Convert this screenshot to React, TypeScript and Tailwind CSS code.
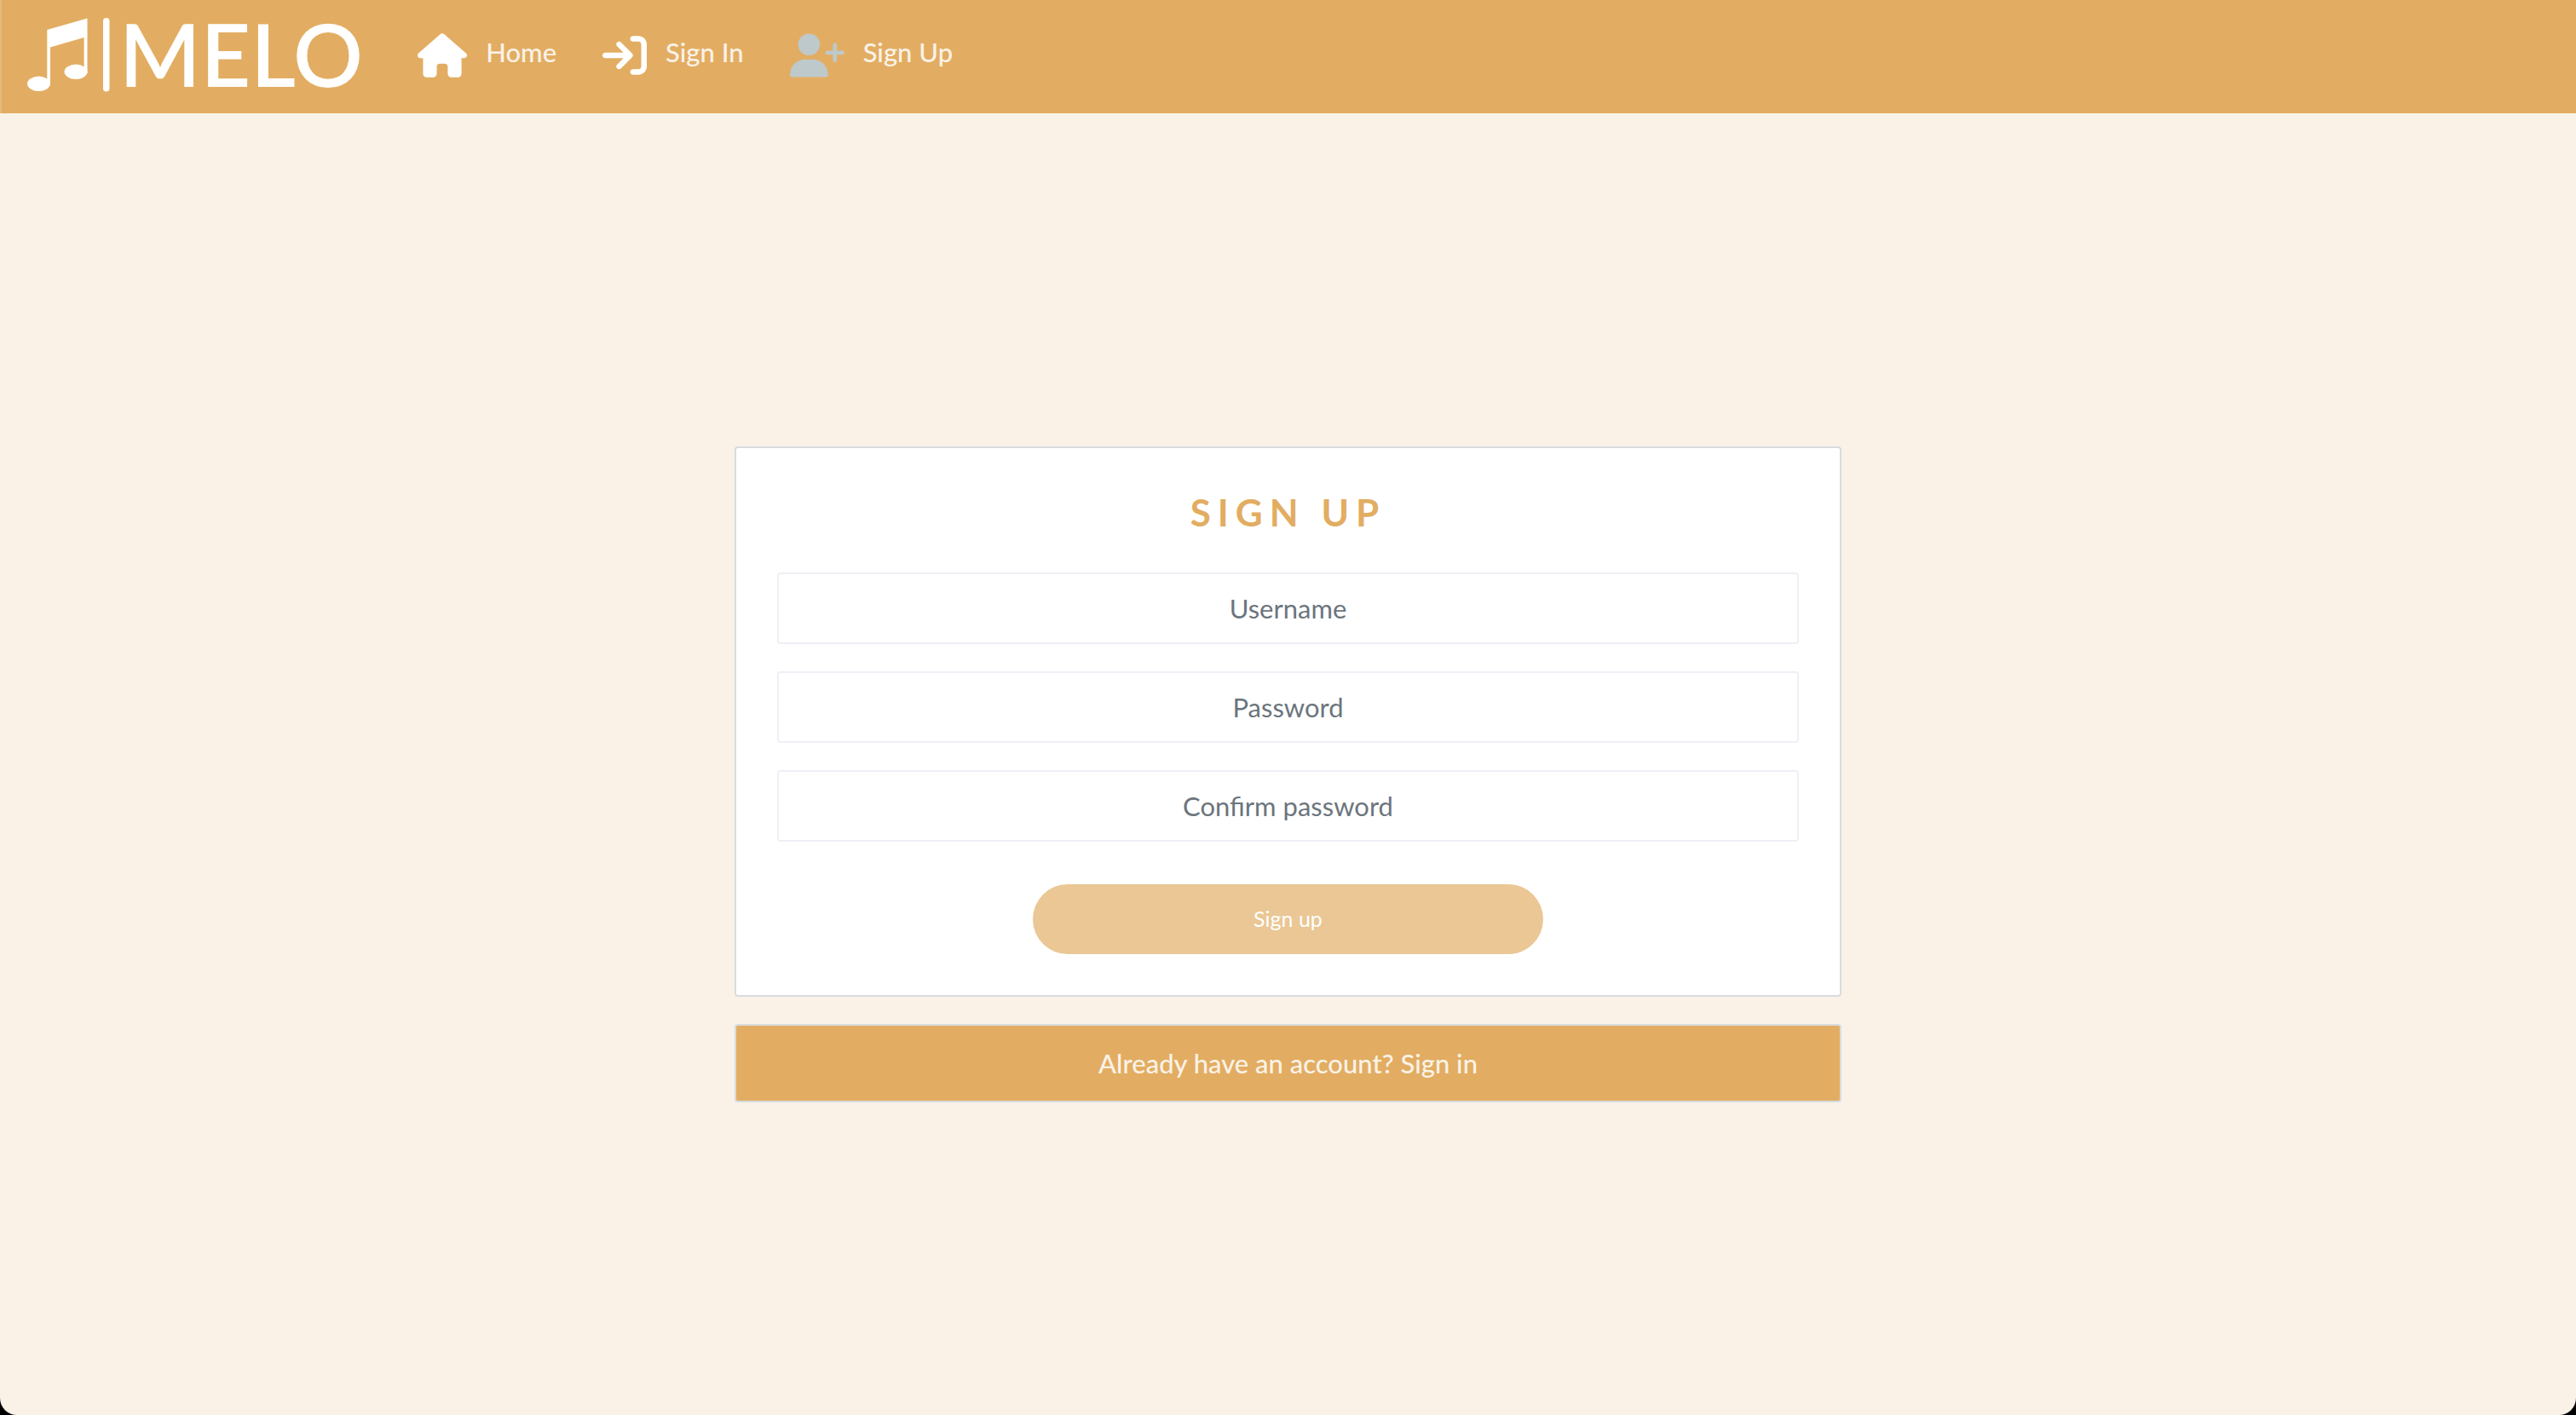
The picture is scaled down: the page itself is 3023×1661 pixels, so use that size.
import { FaHouse, FaArrowRightToBracket, FaUserPlus } from "react-icons/fa6";

const links = [
  { label: "Home", Icon: FaHouse, look: "w-[58px] text-white" },
  { label: "Sign In", Icon: FaArrowRightToBracket, look: "w-[52px] text-white" },
  { label: "Sign Up", Icon: FaUserPlus, look: "w-[64px] text-[#bdc9ca]" },
];

const fields = [
  { label: "Username", type: "text", name: "username" },
  { label: "Password", type: "password", name: "password1" },
  { label: "Confirm password", type: "password", name: "password2" },
];

function Logo() {
  return (
    <a href="#home" aria-label="Melo" className="flex items-center text-white">
      <svg viewBox="0 0 98 88" className="h-[88px] w-[98px]" fill="currentColor" aria-hidden="true">
        <path d="M23.3 14 70.5.5V65H66.6V23L27 34.5V79H23.3Z" />
        <ellipse cx="13.5" cy="77.3" rx="13.5" ry="8.7" />
        <ellipse cx="57" cy="63.3" rx="13.5" ry="8.7" />
        <rect x="89" y="0" width="7.5" height="86.5" rx="3.75" />
      </svg>
      <span className="pb-1 pl-[10px] text-[102px] leading-[88px] font-semibold">MELO</span>
    </a>
  );
}

export default function App() {
  return (
    <div className="min-h-screen bg-black font-['Lato',sans-serif]">
      <div className="flex min-h-screen flex-col overflow-hidden rounded-b-[20px] bg-[#faf2e7]">
        <nav className="flex h-[133px] items-center border-l-2 border-[#e6b97a] bg-[#e2ad62] pb-1 pl-[30px]">
          <Logo />
          <ul className="flex items-center gap-[54px] pl-16">
            {links.map(({ label, Icon, look }) => (
              <li key={label}>
                <a href="#" className="flex items-center gap-[22px] text-[31px] leading-[48px] font-medium text-[#faf2e7]">
                  <Icon className={`h-[52px] ${look}`} aria-hidden="true" />
                  <span className="pb-2">{label}</span>
                </a>
              </li>
            ))}
          </ul>
        </nav>

        <main className="mx-auto flex w-[43%] flex-1 flex-col justify-center gap-8 pt-6">
          <form className="flex flex-col items-center gap-8 rounded border-2 border-[#d9dbdf] bg-white p-12">
            <h1 className="mb-3 text-[44px] leading-[54px] font-bold tracking-[8px] text-[#e2ad62] uppercase">Sign Up</h1>
            {fields.map(({ label, type, name }) => (
              <input
                key={name}
                type={type}
                name={name}
                aria-label={label}
                placeholder={label}
                className="h-[84px] w-full rounded border-2 border-[#efeff7] text-center text-[31px] placeholder:text-[#6c757d]"
              />
            ))}
            <button type="submit" className="mt-[18px] h-[82px] w-1/2 rounded-full bg-[#eac794] text-[25px] text-white">
              Sign up
            </button>
          </form>
          <div className="flex h-[92px] items-center justify-center rounded border-2 border-[#d9dbdf] bg-[#e2ad62]">
            <a href="#signin" className="text-[31px] leading-[48px] font-medium text-[#faf2e7]">
              Already have an account? <span>Sign in</span>
            </a>
          </div>
        </main>
      </div>
    </div>
  );
}
